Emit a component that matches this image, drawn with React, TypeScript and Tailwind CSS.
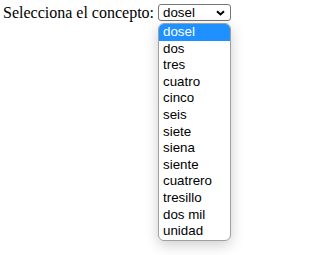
const opciones = [
  "dosel",
  "dos",
  "tres",
  "cuatro",
  "cinco",
  "seis",
  "siete",
  "siena",
  "siente",
  "cuatrero",
  "tresillo",
  "dos mil",
  "unidad",
];

export default function App() {
  const seleccion = "dosel";

  return (
    <div className="min-h-screen bg-white pl-[3px] pt-[4px] text-black">
      <div className="flex items-start gap-[4px]">
        {/* Etiqueta */}
        <span className="font-['Liberation_Serif',serif] text-[16px] leading-[17px] whitespace-nowrap">
          Selecciona el concepto:
        </span>

        {/* Select con el desplegable abierto */}
        <div className="relative">
          <div className="flex h-[17px] w-[73px] items-center justify-between rounded-[3px] border border-[#767676] bg-white pl-[4px] pr-[5px] font-['Liberation_Sans',sans-serif] text-[13.33px] leading-none">
            <span>{seleccion}</span>
            <svg width="9" height="6" viewBox="0 0 9 6" className="mt-[1px]">
              <path d="M1 1.2 L4.5 4.5 L8 1.2" fill="none" stroke="#000" strokeWidth="2" />
            </svg>
          </div>

          <ul className="absolute left-0 top-[19px] w-[73px] overflow-hidden rounded-[6px] border border-[#a0a0a0] bg-white shadow-[0_4px_14px_rgba(0,0,0,0.2)] font-['Liberation_Sans',sans-serif] text-[13.33px]">
            {opciones.map((op) => (
              <li
                key={op}
                className={`h-[16.6px] px-[4px] leading-[16.6px] whitespace-nowrap ${
                  op === seleccion ? "bg-[#1e90ff] text-white" : "text-black"
                }`}
              >
                {op}
              </li>
            ))}
          </ul>
        </div>
      </div>
    </div>
  );
}
